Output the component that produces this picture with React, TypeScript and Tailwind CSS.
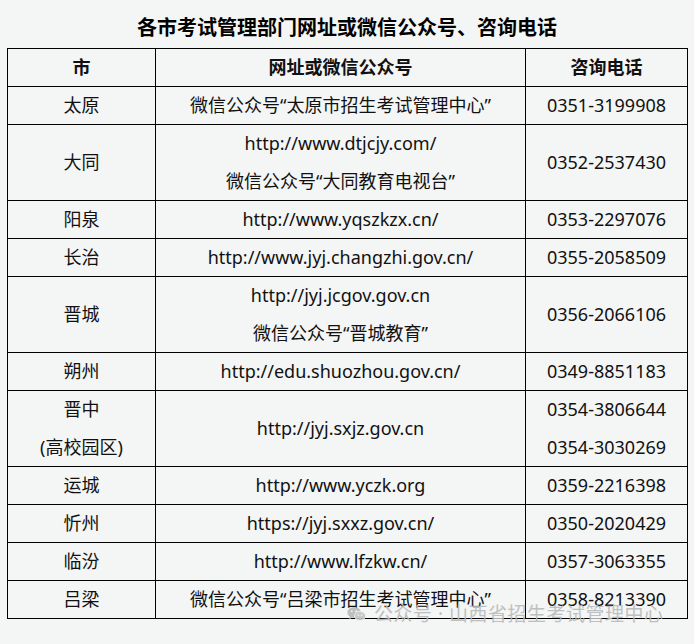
const rows: { city: string[]; sites: string[]; phones: string[] }[] = [
  { city: ["太原"], sites: ["微信公众号“太原市招生考试管理中心”"], phones: ["0351-3199908"] },
  { city: ["大同"], sites: ["http://www.dtjcjy.com/", "微信公众号“大同教育电视台”"], phones: ["0352-2537430"] },
  { city: ["阳泉"], sites: ["http://www.yqszkzx.cn/"], phones: ["0353-2297076"] },
  { city: ["长治"], sites: ["http://www.jyj.changzhi.gov.cn/"], phones: ["0355-2058509"] },
  { city: ["晋城"], sites: ["http://jyj.jcgov.gov.cn", "微信公众号“晋城教育”"], phones: ["0356-2066106"] },
  { city: ["朔州"], sites: ["http://edu.shuozhou.gov.cn/"], phones: ["0349-8851183"] },
  { city: ["晋中", "(高校园区)"], sites: ["http://jyj.sxjz.gov.cn"], phones: ["0354-3806644", "0354-3030269"] },
  { city: ["运城"], sites: ["http://www.yczk.org"], phones: ["0359-2216398"] },
  { city: ["忻州"], sites: ["https://jyj.sxxz.gov.cn/"], phones: ["0350-2020429"] },
  { city: ["临汾"], sites: ["http://www.lfzkw.cn/"], phones: ["0357-3063355"] },
  { city: ["吕梁"], sites: ["微信公众号“吕梁市招生考试管理中心”"], phones: ["0358-8213390"] },
];

const Lines = ({ items }: { items: string[] }) => (
  <>
    {items.map((t) => (
      <div key={t} className={items.length > 1 ? "leading-[37.5px]" : "leading-[37px]"}>
        {t}
      </div>
    ))}
  </>
);

const WechatIcon = () => (
  <svg viewBox="0 0 24 20" className="h-[16px] w-[19px]" fill="currentColor">
    <ellipse cx="9" cy="8" rx="8.5" ry="7" />
    <path d="M3.5 13 L2.5 17 L7 14.5 Z" />
    <ellipse cx="16.5" cy="12.5" rx="7" ry="5.8" fill="#c4c6c6" stroke="#f4f5f5" strokeWidth="1" />
    <circle cx="6" cy="6.5" r="1.1" fill="#f4f5f5" />
    <circle cx="11.5" cy="6.5" r="1.1" fill="#f4f5f5" />
    <circle cx="14.5" cy="11.5" r="0.9" fill="#f4f5f5" />
    <circle cx="18.5" cy="11.5" r="0.9" fill="#f4f5f5" />
  </svg>
);

export default function App() {
  return (
    <div
      className="relative h-[644px] w-[694px] bg-[#f4f5f5] text-[18px] text-[#111]"
      style={{ fontFamily: '"Noto Sans", "Noto Sans CJK SC", sans-serif' }}
    >
      <h1 className="pt-[13px] text-center text-[20px] font-bold leading-[30px] text-black">
        各市考试管理部门网址或微信公众号、咨询电话
      </h1>
      <table className="ml-[7px] mt-[5px] w-[680px] table-fixed border-collapse text-center">
        <colgroup>
          <col className="w-[148px]" />
          <col className="w-[370px]" />
          <col className="w-[162px]" />
        </colgroup>
        <thead>
          <tr className="font-bold leading-[37px]">
            <th className="border border-black p-0">市</th>
            <th className="border border-black p-0">网址或微信公众号</th>
            <th className="border border-black p-0">咨询电话</th>
          </tr>
        </thead>
        <tbody>
          {rows.map((r) => (
            <tr key={r.city[0]}>
              <td className="border border-black p-0 align-middle">
                <Lines items={r.city} />
              </td>
              <td className="border border-black p-0 align-middle">
                <Lines items={r.sites} />
              </td>
              <td className="border border-black p-0 align-middle">
                <Lines items={r.phones} />
              </td>
            </tr>
          ))}
        </tbody>
      </table>
      <div className="pointer-events-none absolute left-[347px] top-[602px] flex items-center gap-[8px] text-[19px] leading-[24px] text-[#b9bbbb] opacity-90">
        <WechatIcon />
        <span className="tracking-[0.5px]">公众号 · 山西省招生考试管理中心</span>
      </div>
    </div>
  );
}
